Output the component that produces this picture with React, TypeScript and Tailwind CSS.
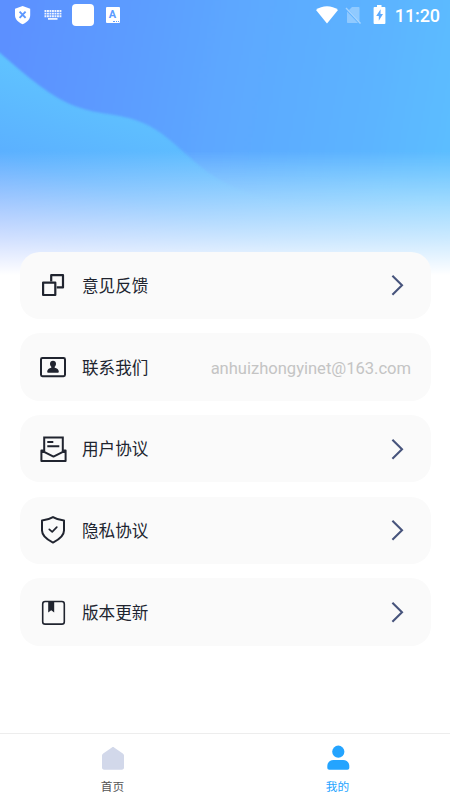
import React from "react";

const ink = "#20242f";

function FeedbackIcon() {
  return (
    <svg className="h-7 w-7" viewBox="0 0 28 28" fill="none" stroke={ink} strokeWidth="2.2" strokeLinejoin="round" aria-hidden>
      <path d="M12.2 10.5V4.200H24v12.200h-6.300" />
      <rect x="4.100" y="11.600" width="12.200" height="12.400" />
    </svg>
  );
}

function ContactIcon() {
  return (
    <svg className="h-7 w-7" viewBox="0 0 28 28" fill="none" aria-hidden>
      <rect x="2" y="5" width="24" height="18.200" rx="1.400" stroke={ink} strokeWidth="2" />
      <path
        d="M14 7.800c1.800 0 3 1.300 3 3 0 1.300-.6 2.300-1.300 3v.9c2.300.600 4.100 1.800 4.100 3.800 0 .7-.4 1.300-1.200 1.300H9.400c-.8 0-1.200-.6-1.200-1.300 0-2 1.800-3.200 4.100-3.800v-.9c-.7-.7-1.300-1.700-1.300-3 0-1.700 1.200-3 3-3Z"
        fill={ink}
      />
    </svg>
  );
}

function AgreementIcon() {
  return (
    <svg className="h-7 w-7" viewBox="0 0 28 28" fill="none" stroke={ink} strokeWidth="2" aria-hidden>
      <path d="M5.200 16.500V2.500h18.600v14" />
      <path d="M8.300 6.900h6M8.300 11.200h12" />
      <path d="M4.800 15.400H2.400v10.700h24.200V15.400h-2.400M2.600 15.600l11.900 6 11.900-6" strokeLinejoin="round" />
    </svg>
  );
}

function PrivacyIcon() {
  return (
    <svg className="h-7 w-7" viewBox="0 0 28 28" fill="none" stroke={ink} strokeWidth="2" strokeLinecap="round" strokeLinejoin="round" aria-hidden>
      <path d="M14 1.100c3.300 2 7 3 11 3.300v10.200c0 5.200-4.800 9-11 12-6.200-3-11-6.800-11-12V4.400c4-.3 7.700-1.300 11-3.300Z" />
      <path d="m10.300 13.300 2.900 2.600 4.600-4.700" strokeWidth="1.700" />
    </svg>
  );
}

function VersionIcon() {
  return (
    <svg className="h-7 w-7" viewBox="0 0 28 28" fill="none" aria-hidden>
      <rect x="3.700" y="3.500" width="21.600" height="22.600" rx="2.400" stroke={ink} strokeWidth="1.600" />
      <path d="M9.200 3h6v11.600l-3-2.300-3 2.300Z" fill={ink} />
    </svg>
  );
}

interface MenuItem {
  label: string;
  icon: React.FC;
  detail?: string;
}

const menuItems: MenuItem[] = [
  { label: "意见反馈", icon: FeedbackIcon },
  { label: "联系我们", icon: ContactIcon, detail: "anhuizhongyinet@163.com" },
  { label: "用户协议", icon: AgreementIcon },
  { label: "隐私协议", icon: PrivacyIcon },
  { label: "版本更新", icon: VersionIcon },
];

function MenuRow({ label, icon: Icon, detail }: MenuItem) {
  return (
    <button type="button" className="flex h-[67.3px] w-full shrink-0 items-center rounded-[20px] bg-[#fafafa] px-[19.5px] text-left">
      <Icon />
      <span className="mt-[3px] ml-[15px] text-[16.6px] leading-6 text-[#20242f]">{label}</span>
      {detail ? (
        <span className="mt-[3px] ml-auto text-[16.6px] leading-6 tracking-[-0.03px] text-[#c4c4c4]">{detail}</span>
      ) : (
        <svg className="mr-[5px] ml-auto h-[22px] w-[16px]" viewBox="0 0 16 22" fill="none" stroke="#47547c" strokeWidth="2.1" aria-hidden>
          <path d="m2.400 1.700 9.600 9.500-9.600 9.500" />
        </svg>
      )}
    </button>
  );
}

function StatusBar() {
  return (
    <div className="flex h-[30px] shrink-0 items-center justify-between pr-[10px] pl-[14px] text-white">
      <div className="flex items-center">
        <svg className="h-[20px] w-[17px]" viewBox="0 0 17 20" aria-hidden>
          <path d="M8.600 1 16.200 3.800v6.200c0 4-3 7.500-7.600 9.200C4 17.500 1 14 1 10V3.800Z" fill="#fff" />
          <path d="m5.600 6.600 6 6.200M11.600 6.600l-6 6.200" stroke="#5c97ff" strokeWidth="1.900" />
        </svg>
        <svg className="ml-[13px] h-[10px] w-[18px]" viewBox="0 0 18 10" aria-hidden>
          <path d="M.5 1h17M.5 3.600h17M.5 6.200h17" stroke="#fff" strokeWidth="1.900" strokeDasharray="1.900 .6" opacity=".9" />
          <path d="M4 8.900h9.500" stroke="#fff" strokeWidth="1.600" />
        </svg>
        <span className="ml-[9.500px] h-[22px] w-[22px] rounded-[4px] bg-white" />
        <span className="relative ml-[12px] flex h-[16px] w-[14px] justify-center rounded-[1px] bg-white text-[11px] leading-[15px] font-bold text-[#5c9cff]">
          A
          <span className="absolute right-[1px] bottom-[1px] h-px w-[6px] border-t border-dotted border-[#5c9cff]" />
        </span>
      </div>
      <div className="flex items-center">
        <svg className="h-[18px] w-[22px]" viewBox="0 0 22 18" aria-hidden>
          <path d="M0 4C6-1 16-1 22 4L11 17.500Z" fill="#fff" />
        </svg>
        <svg className="ml-[7px] h-[18px] w-[17px]" viewBox="0 0 17 18" aria-hidden>
          <path d="M7 1h6.500c.6 0 1 .4 1 1v13.500L4 4Z" fill="#fff" opacity=".32" />
          <path d="M2 5.500 13 17H2.800c-.5 0-.8-.3-.8-.8Z" fill="#fff" opacity=".32" />
          <path d="m1 2 14.500 15.500" stroke="#fff" strokeWidth="1.300" opacity=".45" />
        </svg>
        <svg className="mb-px ml-[11px] h-[19px] w-[13px]" viewBox="0 0 13 19" aria-hidden>
          <path d="M4 0h4.500v2h3c.6 0 .9.400.9.900V18c0 .5-.3.900-.9.900h-10c-.6 0-.9-.4-.9-.9V2.900c0-.5.300-.9.900-.9H4Z" fill="#fff" />
          <path d="M7.600 4.300 3.200 11h2.600v4.800L10 9H7.500Z" fill="#5caaff" />
        </svg>
        <span className="ml-[9px] mt-px text-[18px] leading-[30px] font-medium tracking-[-0.1px]">11:20</span>
      </div>
    </div>
  );
}

function HeaderBackdrop() {
  return (
    <svg className="absolute inset-x-0 top-0 h-[285px] w-[450px]" viewBox="0 0 450 285" aria-hidden>
      <defs>
        <linearGradient id="base" x1="0" y1="60" x2="-64.500" y2="253.500" gradientUnits="userSpaceOnUse">
          <stop offset="0" stopColor="#5fc2ff" />
          <stop offset=".43" stopColor="#5bb0ff" />
          <stop offset="1" stopColor="#7594ff" />
        </linearGradient>
        <linearGradient id="wave" x1="0" y1="60" x2="450" y2="140" gradientUnits="userSpaceOnUse">
          <stop offset="0" stopColor="#5c90ff" />
          <stop offset=".25" stopColor="#5c9bff" />
          <stop offset=".5" stopColor="#5da8ff" />
          <stop offset=".8" stopColor="#5cb3ff" />
          <stop offset="1" stopColor="#5bbdff" />
        </linearGradient>
        <linearGradient id="waveFade" x1="0" y1="150" x2="0" y2="206" gradientUnits="userSpaceOnUse">
          <stop offset="0" stopColor="#fff" />
          <stop offset="1" stopColor="#fff" stopOpacity="0" />
        </linearGradient>
        <linearGradient id="whiteFade" x1="0" y1="151" x2="0" y2="275" gradientUnits="userSpaceOnUse">
          <stop offset="0" stopColor="#fff" stopOpacity="0" />
          <stop offset=".7" stopColor="#fff" stopOpacity=".68" />
          <stop offset="1" stopColor="#fff" />
        </linearGradient>
        <mask id="waveMask">
          <rect width="450" height="285" fill="url(#waveFade)" />
        </mask>
        <filter id="soft" x="-5%" y="-5%" width="110%" height="110%">
          <feGaussianBlur stdDeviation="1.300" />
        </filter>
      </defs>
      <rect width="450" height="285" fill="url(#base)" />
      <g mask="url(#waveMask)">
        <path
          d="M-10-10H460V230H420C340 208 274 203 236 188C205 175 190 156 166 137C147 122 133 118 108 114C80 110 63 103 40 86C25 75 13 64 0 53L-10 45Z"
          fill="url(#wave)"
          filter="url(#soft)"
        />
      </g>
      <rect width="450" height="285" fill="url(#whiteFade)" />
    </svg>
  );
}

function TabBar() {
  return (
    <nav className="flex h-[67px] shrink-0 border-t border-[#ededed] bg-white text-[11.700px] leading-4">
      <div className="flex flex-1 flex-col items-center pt-[11px] text-[#555]">
        <svg className="h-[26px] w-[26px]" viewBox="0 0 26 26" aria-hidden>
          <path d="M11.900 2.400c.7-.5 1.500-.5 2.200 0l8.700 6c.8.600 1.200 1.300 1.200 2.200v11.900c0 1.400-.8 2.200-2.200 2.200H4.200C2.800 24.700 2 23.900 2 22.500V10.600c0-.9.400-1.600 1.200-2.200Z" fill="#d2d8ea" />
        </svg>
        <span className="mt-[8px]">首页</span>
      </div>
      <div className="flex flex-1 flex-col items-center pt-[11px] text-[#24a4ff]">
        <svg className="h-[26px] w-[26px]" viewBox="0 0 26 26" fill="#24a4ff" aria-hidden>
          <circle cx="13.300" cy="6.700" r="6.100" />
          <path d="M8.500 15.100h9.600c3.500 0 6.200 2.600 6.200 6v1.700c0 1.200-.8 2-2 2h-18c-1.200 0-2-.8-2-2v-1.700c0-3.400 2.700-6 6.200-6Z" />
        </svg>
        <span className="mt-[8px]">我的</span>
      </div>
    </nav>
  );
}

export default function App() {
  return (
    <div className="relative flex h-[800px] w-[450px] flex-col overflow-hidden bg-white font-[Roboto,'Noto_Sans_CJK_SC',sans-serif]">
      <HeaderBackdrop />
      <div className="relative flex min-h-0 flex-1 flex-col">
        <StatusBar />
        <main className="mt-[221.700px] flex flex-1 flex-col gap-[14.400px] px-[19.500px]">
          {menuItems.map((item) => (
            <MenuRow key={item.label} {...item} />
          ))}
        </main>
        <TabBar />
      </div>
    </div>
  );
}
